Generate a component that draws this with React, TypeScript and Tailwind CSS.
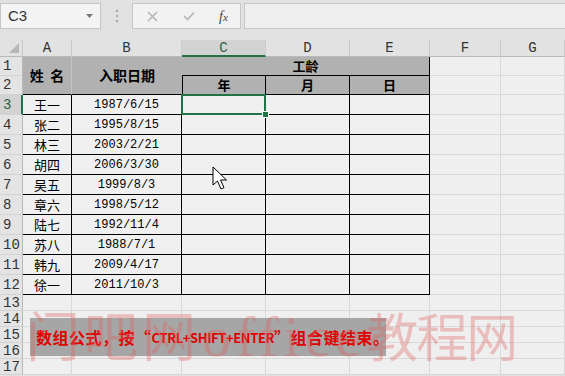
import React from "react";

const data: [string, string][] = [
  ["王一", "1987/6/15"],
  ["张二", "1995/8/15"],
  ["林三", "2003/2/21"],
  ["胡四", "2006/3/30"],
  ["吴五", "1999/8/3"],
  ["章六", "1998/5/12"],
  ["陆七", "1992/11/4"],
  ["苏八", "1988/7/1"],
  ["韩九", "2009/4/17"],
  ["徐一", "2011/10/3"],
];

const rowHead =
  "bg-[#e4e4e4] border-r border-b border-r-[#b9b9b9] border-b-[#d3d3d3] pl-[3px] flex items-center text-[14px] text-[#333] font-['Liberation_Mono',monospace] leading-none";
const light = "bg-[#efefef] border-r border-b border-[#d9d9d9]";
const blk = "bg-[#f0f0f0] border-r border-b border-black";
const colHead =
  "bg-[#e2e2e2] border-r border-b border-r-[#cacaca] border-b-[#b9b9b9] flex items-center justify-center text-[14px] text-[#333] font-['Liberation_Mono',monospace] leading-none";

export default function App() {
  return (
    <div className="relative w-[565px] h-[376px] overflow-hidden bg-[#e1e1e1] font-['Noto_Sans_CJK_SC',sans-serif]">
      {/* Formula bar */}
      <div className="h-[40px] flex items-start pt-[3px]">
        <div className="w-[101px] h-[26px] border border-[#c6c6c6] bg-[#f4f4f4] flex items-center justify-between pl-[7px] pr-[7px]">
          <span className="text-[15px] text-[#333] font-['Liberation_Sans',sans-serif]">C3</span>
          <svg width="7" height="4" viewBox="0 0 7 4">
            <path d="M0 0 L7 0 L3.5 4 Z" fill="#777" />
          </svg>
        </div>
        <div className="ml-[14px] w-[3px] h-[26px] flex flex-col items-center justify-center gap-[3px]">
          <div className="w-[2px] h-[2px] bg-[#a5a5a5]" />
          <div className="w-[2px] h-[2px] bg-[#a5a5a5]" />
          <div className="w-[2px] h-[2px] bg-[#a5a5a5]" />
        </div>
        <div className="ml-[14px] w-[109px] h-[26px] border border-[#c6c6c6] bg-[#f2f2f2] flex items-center">
          <div className="w-[38px] flex justify-center">
            <svg width="11" height="11" viewBox="0 0 11 11">
              <path d="M1 1 L10 10 M10 1 L1 10" stroke="#b5b5b5" strokeWidth="1.5" />
            </svg>
          </div>
          <div className="w-[36px] flex justify-center">
            <svg width="12" height="10" viewBox="0 0 12 10">
              <path d="M1 5 L4.5 8.5 L11 1.5" stroke="#b5b5b5" strokeWidth="1.6" fill="none" />
            </svg>
          </div>
          <div className="w-[33px] flex justify-center">
            <span className="italic text-[14px] text-[#444] font-['Liberation_Serif',serif]">
              f<span className="text-[11px]">x</span>
            </span>
          </div>
        </div>
        <div className="ml-[3px] flex-1 h-[26px] border-t border-b border-l border-[#c6c6c6] bg-[#eeeeee]" />
      </div>

      {/* Sheet grid */}
      <div className="grid grid-cols-[23px_49px_110px_84px_84px_80px_71px_64px] grid-rows-[17px_19px_19px_repeat(10,20px)_repeat(5,16px)]">
        {/* header row */}
        <div className="bg-[#e2e2e2] border-r border-b border-r-[#cacaca] border-b-[#b9b9b9] flex items-end justify-end pr-[3px] pb-[3px]">
          <svg width="10" height="10" viewBox="0 0 10 10">
            <path d="M10 0 L10 10 L0 10 Z" fill="#b8b8b8" />
          </svg>
        </div>
        <div className={colHead}>A</div>
        <div className={colHead}>B</div>
        <div className="bg-[#d3d3d3] border-r border-r-[#cacaca] border-b-2 border-b-[#217346] flex items-center justify-center text-[14px] text-[#2f5e42] font-['Liberation_Mono',monospace] leading-none">
          C
        </div>
        <div className={colHead}>D</div>
        <div className={colHead}>E</div>
        <div className={colHead}>F</div>
        <div className={colHead}>G</div>

        {/* row 1 */}
        <div className={rowHead}>1</div>
        <div className="row-span-2 bg-[#b1b1b1] border-r border-b border-r-[#c4c4c4] border-b-black flex items-center justify-center font-bold text-[14px] text-black">
          姓&nbsp;&nbsp;名
        </div>
        <div className="row-span-2 bg-[#b1b1b1] border-b border-b-black flex items-center justify-center font-bold text-[14px] text-black">
          入职日期
        </div>
        <div className="col-span-3 bg-[#b1b1b1] border-r border-b border-black flex items-center justify-center font-bold text-[13px] text-black">
          工龄
        </div>
        <div className={light} />
        <div className={light} />

        {/* row 2 */}
        <div className={rowHead}>2</div>
        <div className="bg-[#b1b1b1] border-l border-r border-b border-black flex items-center justify-center font-bold text-[13px] text-black">
          年
        </div>
        <div className="bg-[#b1b1b1] border-r border-b border-black flex items-center justify-center font-bold text-[13px] text-black">
          月
        </div>
        <div className="bg-[#b1b1b1] border-r border-b border-black flex items-center justify-center font-bold text-[13px] text-black">
          日
        </div>
        <div className={light} />
        <div className={light} />

        {/* rows 3-12 */}
        {data.map(([name, date], i) => {
          const r = i + 3;
          const sel = r === 3;
          return (
            <React.Fragment key={r}>
              {sel ? (
                <div className="bg-[#d3d3d3] border-r-2 border-r-[#217346] border-b border-b-[#d3d3d3] pl-[3px] flex items-center text-[14px] text-[#2f5e42] font-['Liberation_Mono',monospace] leading-none">
                  {r}
                </div>
              ) : (
                <div className={rowHead}>{r}</div>
              )}
              <div className={`${blk} flex items-center justify-center text-[13px] text-black`}>{name}</div>
              <div className={`${blk} flex items-center justify-center text-[12px] text-black font-['Liberation_Mono',monospace]`}>
                {date}
              </div>
              {sel ? (
                <div className={`${blk} relative`}>
                  <div className="absolute -left-[1px] -top-[1px] -right-[1px] -bottom-[1px] border-2 border-[#217346]" />
                  <div className="absolute -right-[3px] -bottom-[3px] w-[5px] h-[5px] bg-[#217346] outline outline-1 outline-white" />
                </div>
              ) : (
                <div className={blk} />
              )}
              <div className={blk} />
              <div className={blk} />
              <div className={light} />
              <div className={light} />
            </React.Fragment>
          );
        })}

        {/* rows 13-17 */}
        {[13, 14, 15, 16, 17].map((r) => (
          <React.Fragment key={r}>
            <div className={`${rowHead} text-[13px]`}>{r}</div>
            <div className={light} />
            <div className={light} />
            <div className={light} />
            <div className={light} />
            <div className={light} />
            <div className={light} />
            <div className={light} />
          </React.Fragment>
        ))}
      </div>

      {/* Banner overlay */}
      <div className="absolute left-[30px] top-[318px] w-[356px] h-[38px] bg-[#a6a6a6] flex items-center pl-[6px] whitespace-nowrap">
        <span className="text-[16px] font-bold text-[#e00000] leading-none tracking-[0.5px]">
          数组公式，按“
        </span>
        <span className="text-[13px] tracking-[-0.4px] font-bold text-[#e00000] leading-none">
          CTRL+SHIFT+ENTER
        </span>
        <span className="text-[16px] font-bold text-[#e00000] leading-none tracking-[0.5px]">
          ”组合键结束。
        </span>
      </div>

      {/* Watermark */}
      <div className="absolute left-[26px] top-[308px] flex items-end text-[rgba(225,95,95,0.34)] font-['Liberation_Serif','Noto_Sans_CJK_SC',serif] leading-none pointer-events-none whitespace-nowrap">
        <span className="text-[54px] tracking-[4px]">门吧网</span>
        <span className="ml-[2px] text-[58px] tracking-[5px]">office</span>
        <span className="text-[52px] tracking-[-2px]">教程网</span>
      </div>

      {/* Mouse cursor */}
      <svg className="absolute left-[212px] top-[166px]" width="17" height="26" viewBox="0 0 17 26">
        <path
          d="M1 1 L1 19 L5.5 15 L9 23 L12 21.6 L8.5 14 L14.5 14 Z"
          fill="#ffffff"
          stroke="#000000"
          strokeWidth="1"
          strokeLinejoin="round"
        />
      </svg>
    </div>
  );
}
